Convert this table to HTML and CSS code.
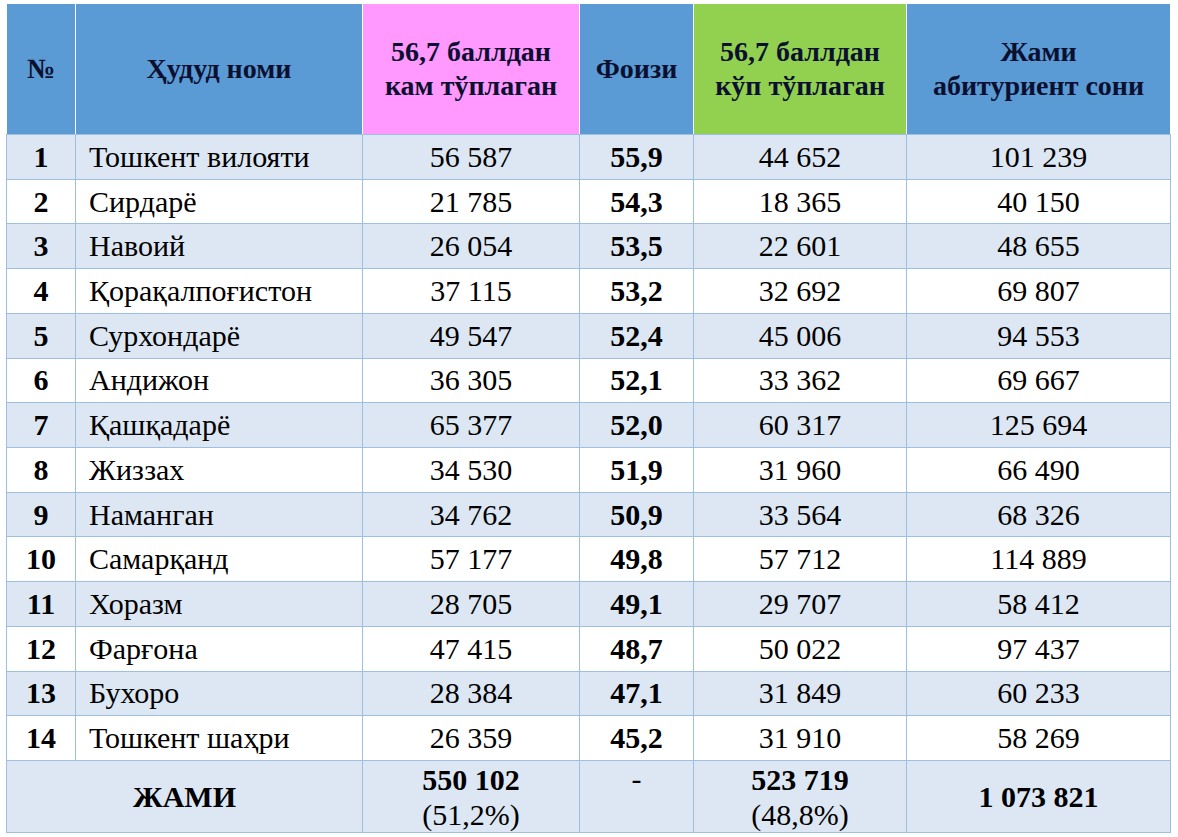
FILE: index.html
```html
<!DOCTYPE html>
<html lang="ru">
<head>
<meta charset="utf-8">
<link rel="stylesheet" href="styles.css">
</head>
<body>
<div class="sheet">
  <div class="head">
    <div class="hc blue">№</div>
    <div class="hc blue">Ҳудуд номи</div>
    <div class="hc pink">56,7 баллдан<br>кам тўплаган</div>
    <div class="hc blue">Фоизи</div>
    <div class="hc green">56,7 баллдан<br>кўп тўплаган</div>
    <div class="hc blue">Жами<br>абитуриент сони</div>
  </div>
  <div class="body">
    <div class="row odd"><div class="c bold">1</div><div class="c name">Тошкент вилояти</div><div class="c">56 587</div><div class="c bold">55,9</div><div class="c">44 652</div><div class="c">101 239</div></div>
    <div class="row"><div class="c bold">2</div><div class="c name">Сирдарё</div><div class="c">21 785</div><div class="c bold">54,3</div><div class="c">18 365</div><div class="c">40 150</div></div>
    <div class="row odd"><div class="c bold">3</div><div class="c name">Навоий</div><div class="c">26 054</div><div class="c bold">53,5</div><div class="c">22 601</div><div class="c">48 655</div></div>
    <div class="row"><div class="c bold">4</div><div class="c name">Қорақалпоғистон</div><div class="c">37 115</div><div class="c bold">53,2</div><div class="c">32 692</div><div class="c">69 807</div></div>
    <div class="row odd"><div class="c bold">5</div><div class="c name">Сурхондарё</div><div class="c">49 547</div><div class="c bold">52,4</div><div class="c">45 006</div><div class="c">94 553</div></div>
    <div class="row"><div class="c bold">6</div><div class="c name">Андижон</div><div class="c">36 305</div><div class="c bold">52,1</div><div class="c">33 362</div><div class="c">69 667</div></div>
    <div class="row odd"><div class="c bold">7</div><div class="c name">Қашқадарё</div><div class="c">65 377</div><div class="c bold">52,0</div><div class="c">60 317</div><div class="c">125 694</div></div>
    <div class="row"><div class="c bold">8</div><div class="c name">Жиззах</div><div class="c">34 530</div><div class="c bold">51,9</div><div class="c">31 960</div><div class="c">66 490</div></div>
    <div class="row odd"><div class="c bold">9</div><div class="c name">Наманган</div><div class="c">34 762</div><div class="c bold">50,9</div><div class="c">33 564</div><div class="c">68 326</div></div>
    <div class="row"><div class="c bold">10</div><div class="c name">Самарқанд</div><div class="c">57 177</div><div class="c bold">49,8</div><div class="c">57 712</div><div class="c">114 889</div></div>
    <div class="row odd"><div class="c bold">11</div><div class="c name">Хоразм</div><div class="c">28 705</div><div class="c bold">49,1</div><div class="c">29 707</div><div class="c">58 412</div></div>
    <div class="row"><div class="c bold">12</div><div class="c name">Фарғона</div><div class="c">47 415</div><div class="c bold">48,7</div><div class="c">50 022</div><div class="c">97 437</div></div>
    <div class="row odd"><div class="c bold">13</div><div class="c name">Бухоро</div><div class="c">28 384</div><div class="c bold">47,1</div><div class="c">31 849</div><div class="c">60 233</div></div>
    <div class="row"><div class="c bold">14</div><div class="c name">Тошкент шаҳри</div><div class="c">26 359</div><div class="c bold">45,2</div><div class="c">31 910</div><div class="c">58 269</div></div>
    <div class="row odd total"><div class="c bold span2">ЖАМИ</div><div class="c two"><span class="bold">550 102</span><span>(51,2%)</span></div><div class="c top">-</div><div class="c two"><span class="bold">523 719</span><span>(48,8%)</span></div><div class="c bold">1 073 821</div></div>
  </div>
</div>
</body>
</html>
```
FILE: styles.css
```css
html, body {
  margin: 0;
  padding: 0;
  background: #ffffff;
}
.sheet {
  padding: 3px 0 0 6px;
  font-family: "Times New Roman", Tinos, "Liberation Serif", serif;
  color: #000000;
}
.head {
  display: grid;
  grid-template-columns: 68px 286px 216px 113px 212px 263px;
  grid-template-rows: 130px;
  column-gap: 1px;
  padding: 1px 1px 0 1px;
  width: 1163px;
  background: #ffffff;
}
.hc {
  display: flex;
  align-items: center;
  justify-content: center;
  text-align: center;
  font-family: "Times New Roman", Tinos, "Liberation Serif", serif;
  font-weight: bold;
  font-size: 28px;
  line-height: 34px;
  color: #0c1030;
}
.blue { background: #5b9bd5; }
.pink { background: #ff99ff; }
.green { background: #92d050; }
.body {
  display: grid;
  grid-template-columns: 68px 286px 216px 113px 212px 263px;
  grid-template-rows: repeat(14, 43.72px) 71px;
  gap: 1px;
  padding: 1px;
  width: 1163px;
  background: #9dc0e2;
}
.row {
  display: contents;
}
.c {
  display: flex;
  align-items: center;
  justify-content: center;
  background: #ffffff;
  font-family: "Times New Roman", Tinos, "Liberation Serif", serif;
  font-size: 30px;
  line-height: 34px;
  white-space: nowrap;
}
.odd > .c {
  background: #dce7f3;
}
.bold {
  font-weight: bold;
}
.c.name {
  justify-content: flex-start;
  padding-left: 13px;
}
.span2 {
  grid-column: span 2;
}
.c.two {
  flex-direction: column;
  line-height: 35px;
}
.c.top {
  align-items: flex-start;
  line-height: 35px;
}
```
